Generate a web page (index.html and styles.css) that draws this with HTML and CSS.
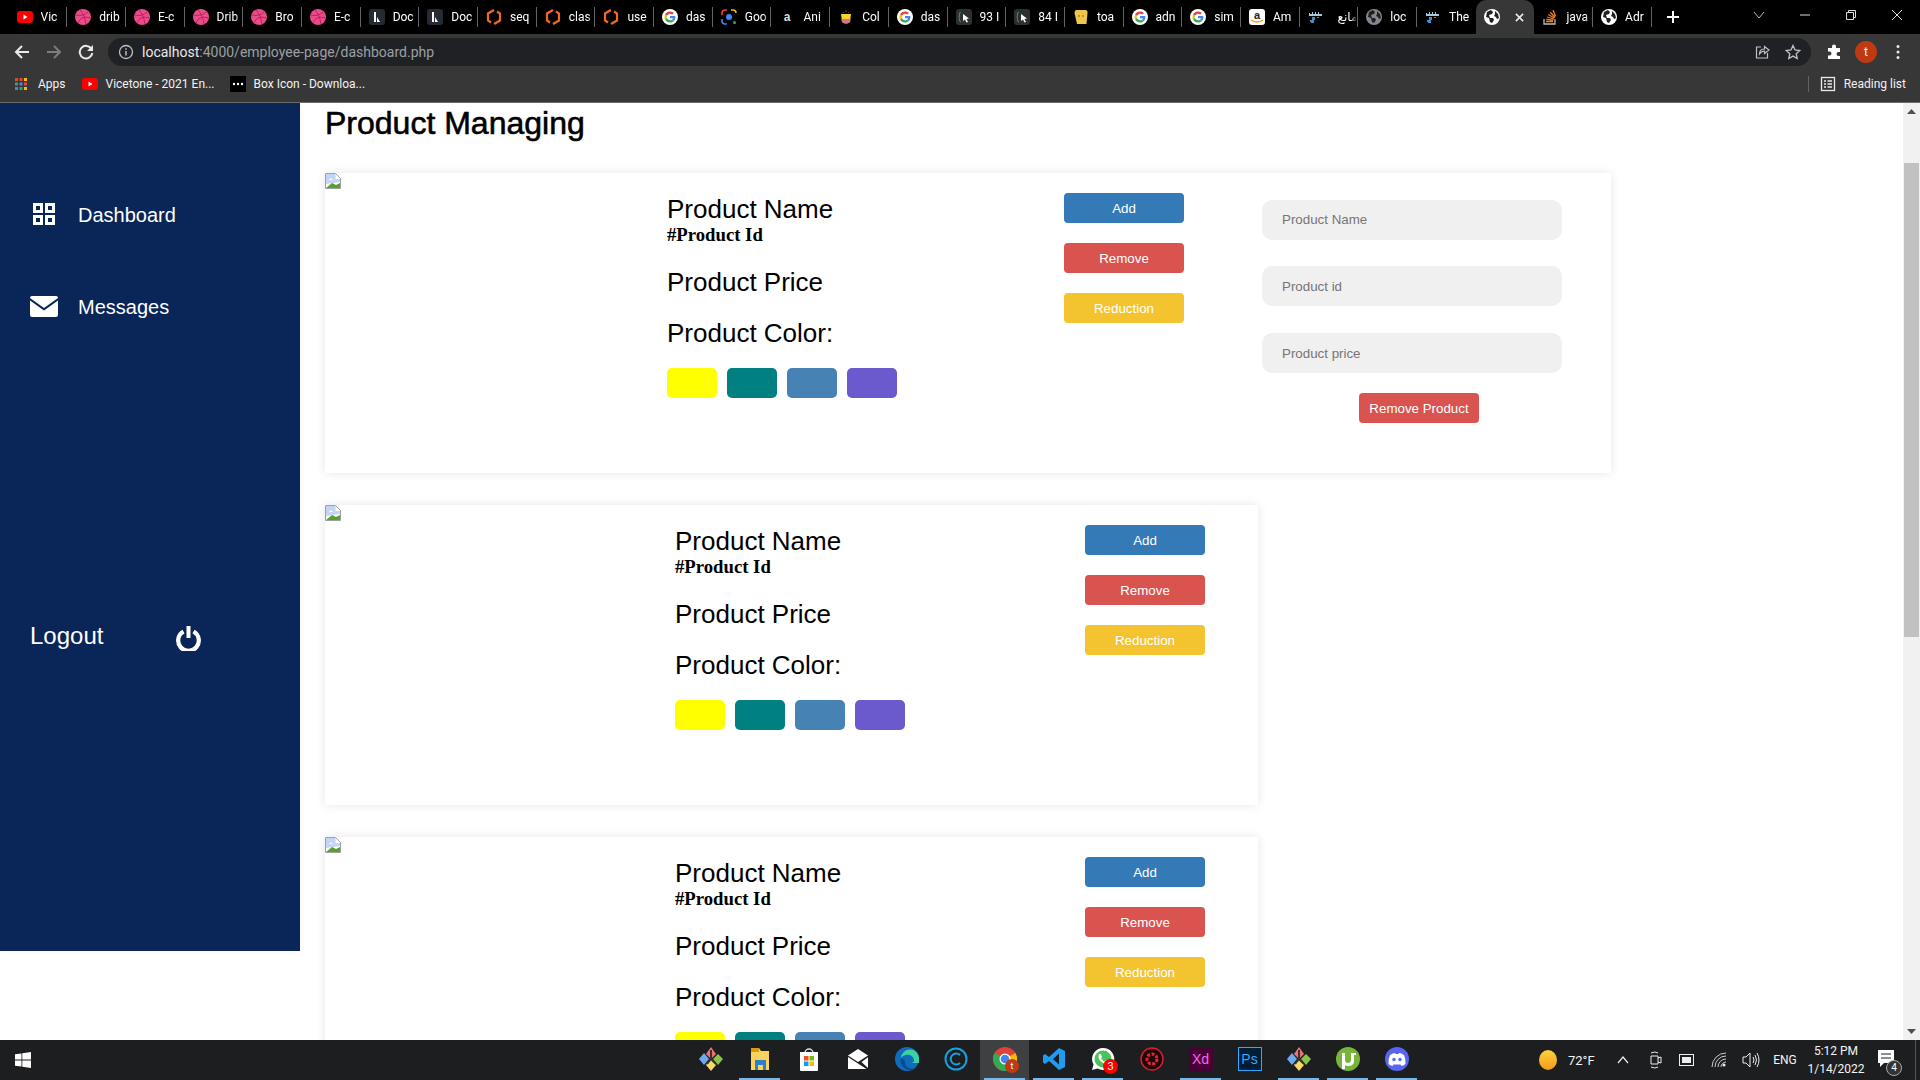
FILE: index.html
```html
<!DOCTYPE html>
<html>
<head>
    <meta charset="utf-8">
    <title>Product Managing</title>
    <link rel="stylesheet" href="styles.css">
</head>
<body>
<svg class="defs">
    <symbol id="i-yt" viewBox="0 0 16 16"><rect y="2" width="16" height="12" rx="3" fill="#f00"/><path d="M6.5 5.5l4 2.5-4 2.5z" fill="#fff"/></symbol>
    <symbol id="i-drib" viewBox="0 0 16 16"><circle cx="8" cy="8" r="8" fill="#ea4c89"/><path d="M1 6c5 1 9 0 12-3M3 14C5 9 9 7 15 9M5 1c3 3 5 8 6 14" fill="none" stroke="#b8215f" stroke-width="1"/></symbol>
    <symbol id="i-doc" viewBox="0 0 16 16"><rect width="16" height="16" rx="3" fill="#252b33"/><path d="M5 3h2v10H5zM8 8l3 5H8z" fill="#fff"/></symbol>
    <symbol id="i-seq" viewBox="0 0 16 16"><path d="M8 1L2 4.500v7l3 2M11 2.500l3 2v7L8 15" fill="none" stroke="#f26a1b" stroke-width="2.200"/></symbol>
    <symbol id="i-goo" viewBox="0 0 48 48"><circle cx="24" cy="24" r="24" fill="#fff"/><path fill="#ea4335" d="M24 14c2.700 0 5 1 6.800 2.700l4.800-4.800C32.600 9.200 28.700 7.500 24 7.500c-6.500 0-12 3.700-14.700 9.100l5.600 4.300C16.200 17 19.800 14 24 14z"/><path fill="#4285f4" d="M40 24.500c0-1.200-.1-2.300-.3-3.400H24v6.400h9c-.4 2.100-1.600 3.800-3.400 5l5.400 4.200c3.200-2.900 5-7.200 5-12.200z"/><path fill="#fbbc05" d="M14.900 27.100c-.3-1-.5-2-.5-3.100s.2-2.100.5-3.100l-5.600-4.300C8.200 18.800 7.500 21.300 7.500 24s.7 5.200 1.800 7.400z"/><path fill="#34a853" d="M24 40.500c4.500 0 8.200-1.500 11-4l-5.400-4.200c-1.500 1-3.400 1.600-5.600 1.600-4.200 0-7.800-2.900-9.100-6.800l-5.600 4.300C12 36.800 17.500 40.500 24 40.500z"/></symbol>
    <symbol id="i-lens" viewBox="0 0 16 16"><path d="M1 6V4a3 3 0 0 1 3-3h2" fill="none" stroke="#ea4335" stroke-width="1.600"/><path d="M10 1h2a3 3 0 0 1 3 3" fill="none" stroke="#fbbc05" stroke-width="1.600"/><path d="M6 15H4a3 3 0 0 1-3-3v-2" fill="none" stroke="#4285f4" stroke-width="1.600"/><circle cx="8" cy="8" r="3" fill="#4285f4"/><circle cx="13.500" cy="13.500" r="1.500" fill="#34a853"/></symbol>
    <symbol id="i-a" viewBox="0 0 16 16"><text x="8" y="12" text-anchor="middle" font-family="Liberation Sans, sans-serif" font-size="12" font-weight="bold" fill="#ddd">a</text></symbol>
    <symbol id="i-col" viewBox="0 0 16 16"><path d="M3 5h10l-1 8q-4 3-8 0z" fill="#f6d32d"/><path d="M3.500 10h9l-.5 3q-4 3-8 0z" fill="#d9708f"/><path d="M5 3l.5 1M8 1v2M11 3l-.5 1" stroke="#444"/></symbol>
    <symbol id="i-cur" viewBox="0 0 16 16"><rect width="16" height="16" rx="3" fill="#2d302f"/><path d="M5 3q-2 0-1.500 3L3 8l.5 1.500Q3 13 5 13" fill="none" stroke="#2f9e5f"/><path d="M7 5l6 4.500-2.500.5 1.500 3-1.500.5-1.500-3L7 12z" fill="#fff"/></symbol>
    <symbol id="i-toast" viewBox="0 0 16 16"><path d="M3 1h10q2 1 1.500 3L13.500 15H4L1.500 4Q1.500 2 3 1z" fill="#eec64c"/><circle cx="6" cy="7" r=".8" fill="#76591a"/><circle cx="10" cy="7" r=".8" fill="#76591a"/></symbol>
    <symbol id="i-amz" viewBox="0 0 16 16"><rect width="16" height="16" rx="3" fill="#fff"/><text x="8" y="10" text-anchor="middle" font-family="Liberation Sans, sans-serif" font-size="11" font-weight="bold" fill="#222">a</text><path d="M2 11q6 4 12 0" fill="none" stroke="#f90" stroke-width="1.500"/></symbol>
    <symbol id="i-blot" viewBox="0 0 16 16"><path d="M1 4h1v1h2V3h1v2h2V3h1v2h2V3h1v2h3v2H1z" fill="#a8c9dc"/><path d="M4 8h3v3H6v3H3v-1H2v-2h2z" fill="#3d8fd0"/><path d="M9 8h2v1H9z" fill="#6b8ea3"/></symbol>
    <symbol id="i-globe" viewBox="0 0 16 16"><circle cx="8" cy="8" r="8" fill="#fff"/><path d="M3 3l4-2 2 2-1 2-3 1 1 3 3 0 1 2-2 3-2-1-1-4-3-1zM11 2l3 3 1 4-2 1-1-2-2-1 1-2z" fill="#202124"/></symbol>
    <symbol id="i-globe2" viewBox="0 0 16 16"><circle cx="8" cy="8" r="8" fill="#84888c"/><path d="M3 3l4-2 2 2-1 2-3 1 1 3 3 0 1 2-2 3-2-1-1-4-3-1zM11 2l3 3 1 4-2 1-1-2-2-1 1-2z" fill="#202124"/></symbol>
    <symbol id="i-so" viewBox="0 0 16 16"><path d="M2 10v5h11v-5" fill="none" stroke="#bcbbbb" stroke-width="1.300"/><path d="M4 12.500h7M4.300 10.300l7 .8M5 8l6.800 2M6.300 5.500l6 3.500M8.300 3.200l4.700 5M11 1l2.500 6.300" fill="none" stroke="#f48024" stroke-width="1.300"/></symbol>
    <symbol id="i-kraken" viewBox="0 0 24 24"><path d="M12 0l5 7-5 5-5-5z" fill="#f0716b"/><path d="M19 7l5 5-5 6-5-6z" fill="#8bc34a"/><path d="M12 12l5 6-5 6-5-6z" fill="#f9d866"/><path d="M5 6l5 6-5 6-5-6z" fill="#6da8f0"/><path d="M12 3v9l5 5M12 12l-4 5" stroke="#333" stroke-width="2" fill="none"/></symbol>
    <symbol id="i-broken" viewBox="0 0 16 16"><path d="M.5.500h10l5 5v10H.5z" fill="#fff" stroke="#a0a0a0"/><path d="M1 1h9.500v5H15v3L1 11z" fill="#c3d4f5"/><path d="M4 7q2-3 4 0z" fill="#fff"/><path d="M1 15l6-5 4 2 4-2v5z" fill="#5aa02c"/></symbol>
</svg>

<div class="tabstrip">
    <div class="tabs">
        <div class="tab"><svg class="fav"><use href="#i-yt"/></svg><span class="tab-title">Vic</span></div>
        <div class="tab"><svg class="fav"><use href="#i-drib"/></svg><span class="tab-title">drib</span></div>
        <div class="tab"><svg class="fav"><use href="#i-drib"/></svg><span class="tab-title">E-c</span></div>
        <div class="tab"><svg class="fav"><use href="#i-drib"/></svg><span class="tab-title">Drib</span></div>
        <div class="tab"><svg class="fav"><use href="#i-drib"/></svg><span class="tab-title">Bro</span></div>
        <div class="tab"><svg class="fav"><use href="#i-drib"/></svg><span class="tab-title">E-c</span></div>
        <div class="tab"><svg class="fav"><use href="#i-doc"/></svg><span class="tab-title">Doc</span></div>
        <div class="tab"><svg class="fav"><use href="#i-doc"/></svg><span class="tab-title">Doc</span></div>
        <div class="tab"><svg class="fav"><use href="#i-seq"/></svg><span class="tab-title">seq</span></div>
        <div class="tab"><svg class="fav"><use href="#i-seq"/></svg><span class="tab-title">clas</span></div>
        <div class="tab"><svg class="fav"><use href="#i-seq"/></svg><span class="tab-title">use</span></div>
        <div class="tab"><svg class="fav"><use href="#i-goo"/></svg><span class="tab-title">das</span></div>
        <div class="tab"><svg class="fav"><use href="#i-lens"/></svg><span class="tab-title">Goo</span></div>
        <div class="tab"><svg class="fav"><use href="#i-a"/></svg><span class="tab-title">Ani</span></div>
        <div class="tab"><svg class="fav"><use href="#i-col"/></svg><span class="tab-title">Col</span></div>
        <div class="tab"><svg class="fav"><use href="#i-goo"/></svg><span class="tab-title">das</span></div>
        <div class="tab"><svg class="fav"><use href="#i-cur"/></svg><span class="tab-title">93 I</span></div>
        <div class="tab"><svg class="fav"><use href="#i-cur"/></svg><span class="tab-title">84 I</span></div>
        <div class="tab"><svg class="fav"><use href="#i-toast"/></svg><span class="tab-title">toa</span></div>
        <div class="tab"><svg class="fav"><use href="#i-goo"/></svg><span class="tab-title">adn</span></div>
        <div class="tab"><svg class="fav"><use href="#i-goo"/></svg><span class="tab-title">sim</span></div>
        <div class="tab"><svg class="fav"><use href="#i-amz"/></svg><span class="tab-title">Am</span></div>
        <div class="tab"><svg class="fav"><use href="#i-blot"/></svg><span class="tab-title" dir="rtl">مانع</span></div>
        <div class="tab"><svg class="fav"><use href="#i-globe2"/></svg><span class="tab-title">loc</span></div>
        <div class="tab tab-before-active"><svg class="fav"><use href="#i-blot"/></svg><span class="tab-title">The</span></div>
        <div class="tab tab-active"><svg class="fav"><use href="#i-globe"/></svg><svg class="tab-close" viewBox="0 0 10 10"><path d="M1 1l8 8M9 1L1 9" stroke="#e8eaed" stroke-width="1.800"/></svg></div>
        <div class="tab"><svg class="fav"><use href="#i-so"/></svg><span class="tab-title">java</span></div>
        <div class="tab"><svg class="fav"><use href="#i-globe"/></svg><span class="tab-title">Adr</span></div>
    </div>
    <svg class="new-tab" viewBox="0 0 14 14"><path d="M7 1v12M1 7h12" stroke="#fff" stroke-width="2"/></svg>
    <div class="win-controls">
        <div class="win-btn"><svg width="12" height="12" viewBox="0 0 12 12"><path d="M1 3l5 6 5-6" fill="none" stroke="#bbb"/></svg></div>
        <div class="win-btn"><svg width="12" height="12" viewBox="0 0 12 12"><path d="M1 6h10" stroke="#ddd"/></svg></div>
        <div class="win-btn"><svg width="12" height="12" viewBox="0 0 12 12"><path d="M1.500 3.500h7v7h-7zM3.500 3.500v-2h7v7h-2" fill="none" stroke="#ddd"/></svg></div>
        <div class="win-btn"><svg width="12" height="12" viewBox="0 0 12 12"><path d="M1 1l10 10M11 1L1 11" stroke="#ddd"/></svg></div>
    </div>
</div>

<div class="toolbar">
    <div class="nav-btn"><svg width="16" height="16" viewBox="0 0 16 16"><path d="M15 8H2M8 2L2 8l6 6" fill="none" stroke="#e8eaed" stroke-width="2"/></svg></div>
    <div class="nav-btn"><svg width="16" height="16" viewBox="0 0 16 16"><path d="M1 8h13M8 2l6 6-6 6" fill="none" stroke="#7b7d80" stroke-width="2"/></svg></div>
    <div class="nav-btn"><svg width="16" height="16" viewBox="0 0 16 16"><path d="M13.500 5A6.300 6.300 0 1 0 14.300 9" fill="none" stroke="#e8eaed" stroke-width="2"/><path d="M15 1v6H9z" fill="#e8eaed"/></svg></div>
    <div class="omnibox">
        <svg class="omni-icon" viewBox="0 0 16 16"><circle cx="8" cy="8" r="6.500" fill="none" stroke="#bdc1c6" stroke-width="1.300"/><path d="M8 7v4.500M8 4.300v1.500" stroke="#bdc1c6" stroke-width="1.500"/></svg>
        <span class="url"><span class="url-host">localhost</span>:4000/employee-page/dashboard.php</span>
        <svg class="omni-icon omni-share" viewBox="0 0 16 16"><path d="M7 3H2.500v11h11V9" fill="none" stroke="#bdc1c6" stroke-width="1.200"/><path d="M5.500 10q0-5 5-5V2.500L15 6l-4.500 3.500V7q-3 0-5 3z" fill="none" stroke="#bdc1c6" stroke-width="1.200"/></svg>
        <svg class="omni-icon" viewBox="0 0 16 16"><path d="M8 1.500l2 4.500 4.800.5-3.600 3.200 1 4.800L8 12.100 3.800 14.500l1-4.800L1.200 6.500 6 6z" fill="none" stroke="#bdc1c6" stroke-width="1.300"/></svg>
    </div>
    <div class="nav-btn"><svg width="16" height="16" viewBox="0 0 16 16"><path d="M6 2.500a2 2 0 0 1 4 0V4h4v4h-1.500a2 2 0 0 0 0 4H14v3H2v-3.500h1.500a2 2 0 0 0 0-4H2V4h4z" fill="#fff"/></svg></div>
    <div class="nav-btn"><span class="avatar">t</span></div>
    <div class="nav-btn"><svg width="4" height="16" viewBox="0 0 4 16"><circle cx="2" cy="2.500" r="1.500" fill="#e8eaed"/><circle cx="2" cy="8" r="1.500" fill="#e8eaed"/><circle cx="2" cy="13.500" r="1.500" fill="#e8eaed"/></svg></div>
</div>

<div class="bookmarks">
    <svg class="bm-icon" viewBox="0 0 16 16">
        <path d="M2 2h3v3H2z" fill="#ea4335"/><path d="M6.500 2h3v3h-3z" fill="#ea4335"/><path d="M11 2h3v3h-3z" fill="#fbbc05"/>
        <path d="M2 6.500h3v3H2z" fill="#34a853"/><path d="M6.500 6.500h3v3h-3z" fill="#4285f4"/><path d="M11 6.500h3v3h-3z" fill="#ea4335"/>
        <path d="M2 11h3v3H2z" fill="#4285f4"/><path d="M6.500 11h3v3h-3z" fill="#34a853"/><path d="M11 11h3v3h-3z" fill="#fbbc05"/>
    </svg>
    <span class="bm-text bm-apps">Apps</span>
    <svg class="bm-icon bm-yt"><use href="#i-yt"/></svg>
    <span class="bm-text bm-vice">Vicetone - 2021 En...</span>
    <svg class="bm-icon bm-box" viewBox="0 0 16 16"><rect width="16" height="16" fill="#000"/><circle cx="4" cy="8" r="1.200" fill="#fff"/><circle cx="8" cy="8" r="1.200" fill="#fff"/><circle cx="12" cy="8" r="1.200" fill="#fff"/></svg>
    <span class="bm-text">Box Icon - Downloa...</span>
    <div class="reading-list">
        <svg class="bm-icon" viewBox="0 0 16 16"><rect x="1.500" y="1.500" width="13" height="13" fill="none" stroke="#e8eaed" stroke-width="1.300"/><path d="M4 5h2M4 8h2M4 11h2M7.500 5H12M7.500 8H12M7.500 11H12" stroke="#e8eaed" stroke-width="1.300"/></svg>
        <span class="bm-text">Reading list</span>
    </div>
</div>

<div class="viewport">
    <div class="sidebar">
        <a class="side-link">
            <span class="side-icon"><svg width="22" height="22" viewBox="0 0 22 22"><path d="M1.500 1.500h7v7h-7zM13.500 1.500h7v7h-7zM1.500 13.500h7v7h-7zM13.500 13.500h7v7h-7z" fill="none" stroke="#fff" stroke-width="3"/></svg></span>
            <span class="side-text">Dashboard</span>
        </a>
        <a class="side-link">
            <span class="side-icon"><svg width="28" height="21" viewBox="0 0 28 21"><path d="M2 0h24a2 2 0 0 1 2 2L14 12 0 2a2 2 0 0 1 2-2z" fill="#fff"/><path d="M0 4.500l14 10 14-10V19a2 2 0 0 1-2 2H2a2 2 0 0 1-2-2z" fill="#fff"/></svg></span>
            <span class="side-text">Messages</span>
        </a>
        <a class="side-logout">
            Logout
            <svg class="power" width="25" height="25" viewBox="0 0 25 25"><path d="M7.500 5.500a10.300 10.300 0 1 0 10 0" fill="none" stroke="#fff" stroke-width="4.200"/><path d="M12.500 0v12" stroke="#fff" stroke-width="4"/></svg>
        </a>
    </div>

    <div class="content">
        <h1 class="page-title">Product Managing</h1>

        <div class="card card-edit">
            <svg class="broken"><use href="#i-broken"/></svg>
            <div class="info">
                <h2 class="info-name">Product Name</h2>
                <h3 class="info-id">#Product Id</h3>
                <h2 class="info-price">Product Price</h2>
                <h2 class="info-color">Product Color:</h2>
                <div class="swatches">
                    <span class="swatch sw-yellow"></span><span class="swatch sw-teal"></span><span class="swatch sw-steel"></span><span class="swatch sw-slate"></span>
                </div>
            </div>
            <div class="actions">
                <button class="btn btn-add">Add</button>
                <button class="btn btn-remove">Remove</button>
                <button class="btn btn-reduce">Reduction</button>
            </div>
            <form class="edit-form">
                <input class="field" type="text" placeholder="Product Name">
                <input class="field" type="text" placeholder="Product id">
                <input class="field field-last" type="text" placeholder="Product price">
                <button class="btn btn-remove btn-remove-product" type="button">Remove Product</button>
            </form>
        </div>

        <div class="card">
            <svg class="broken"><use href="#i-broken"/></svg>
            <div class="info">
                <h2 class="info-name">Product Name</h2>
                <h3 class="info-id">#Product Id</h3>
                <h2 class="info-price">Product Price</h2>
                <h2 class="info-color">Product Color:</h2>
                <div class="swatches">
                    <span class="swatch sw-yellow"></span><span class="swatch sw-teal"></span><span class="swatch sw-steel"></span><span class="swatch sw-slate"></span>
                </div>
            </div>
            <div class="actions">
                <button class="btn btn-add">Add</button>
                <button class="btn btn-remove">Remove</button>
                <button class="btn btn-reduce">Reduction</button>
            </div>
        </div>

        <div class="card">
            <svg class="broken"><use href="#i-broken"/></svg>
            <div class="info">
                <h2 class="info-name">Product Name</h2>
                <h3 class="info-id">#Product Id</h3>
                <h2 class="info-price">Product Price</h2>
                <h2 class="info-color">Product Color:</h2>
                <div class="swatches">
                    <span class="swatch sw-yellow"></span><span class="swatch sw-teal"></span><span class="swatch sw-steel"></span><span class="swatch sw-slate"></span>
                </div>
            </div>
            <div class="actions">
                <button class="btn btn-add">Add</button>
                <button class="btn btn-remove">Remove</button>
                <button class="btn btn-reduce">Reduction</button>
            </div>
        </div>
    </div>

    <div class="scrollbar">
        <svg class="scroll-arrow" viewBox="0 0 9 5"><path d="M4.500 0L9 5H0z" fill="#505050"/></svg>
        <div class="scroll-thumb"></div>
        <svg class="scroll-arrow scroll-arrow-down" viewBox="0 0 9 5"><path d="M4.500 5L9 0H0z" fill="#505050"/></svg>
    </div>
</div>

<div class="taskbar">
    <svg class="start" viewBox="0 0 16 16"><path d="M0 2.300l6.500-.9v6.200H0zM7.300 1.300L16 0v7.600H7.300zM0 8.400h6.500v6.200L0 13.700zM7.300 8.400H16V16l-8.700-1.200z" fill="#fff"/></svg>
    <div class="task-icons">
        <div class="task"><svg class="task-svg"><use href="#i-kraken"/></svg></div>
        <div class="task task-open"><svg class="task-svg" viewBox="0 0 24 24"><path d="M3 1h8l2 3h8v19H3z" fill="#f9d35c"/><path d="M3 1h8v4H3z" fill="#d99a0b"/><path d="M7 13h11v10h-3v-5H10v5H7z" fill="#2b80c9"/></svg></div>
        <div class="task"><svg class="task-svg" viewBox="0 0 24 24"><path d="M8 6a4 4 0 0 1 8 0" fill="none" stroke="#ddd" stroke-width="1.500"/><path d="M3 5h18v18a1 1 0 0 1-1 1H4a1 1 0 0 1-1-1z" fill="#fff"/><path d="M7 9h4.500v4.500H7z" fill="#f25022"/><path d="M12.500 9H17v4.500h-4.500z" fill="#7fba00"/><path d="M7 14.500h4.500V19H7z" fill="#00a4ef"/><path d="M12.500 14.500H17V19h-4.500z" fill="#ffb900"/></svg></div>
        <div class="task"><svg class="task-svg" viewBox="0 0 24 24"><path d="M12 2l10 6.500V22H2V8.500z" fill="#fff"/><path d="M2 8.500L12 15l10-6.500v1.800L15.500 15l6.500 6v1h-1.500L12 16.500 2 10z" fill="#1c1d1f"/></svg></div>
        <div class="task"><svg class="task-svg" viewBox="0 0 24 24"><circle cx="12" cy="12" r="12" fill="#0f6cbd"/><path d="M24 12a9 9 0 0 0-18-1c4-5 12-4 13 2 .3 2-1 3-3 3h8q0-2 0-4z" fill="#3bd1a1"/><path d="M6 11c-2 6 3 12 10 12 2 0 4-1 5-2-6 2-12-1-11-7z" fill="#084c8c"/></svg></div>
        <div class="task"><svg class="task-svg" viewBox="0 0 24 24"><circle cx="12" cy="12" r="10.500" fill="none" stroke="#18a0e0" stroke-width="2"/><path d="M16 8a5.500 5.500 0 1 0 0 8" fill="none" stroke="#18a0e0" stroke-width="2"/></svg></div>
        <div class="task task-open task-active"><svg class="task-svg" viewBox="0 0 24 24"><circle cx="12" cy="12" r="12" fill="#db4437"/><path d="M12 12L22.400 6A12 12 0 0 1 14 23.800z" fill="#fbbc05"/><path d="M12 12L14 23.800A12 12 0 0 1 1.600 6z" fill="#34a853"/><circle cx="12" cy="12" r="5.500" fill="#fff"/><circle cx="12" cy="12" r="4.300" fill="#4285f4"/></svg><span class="task-avatar">t</span></div>
        <div class="task task-open"><svg class="task-svg" viewBox="0 0 24 24"><path d="M17 1l6 3v16l-6 3L7 14l-4 3-2-1.500v-7L3 7l4 3z" fill="#1f9cf0"/><path d="M17 6.500L11 12l6 5.500z" fill="#1c1d1f"/></svg></div>
        <div class="task task-open"><svg class="task-svg" viewBox="0 0 24 24"><path d="M12 1a11 11 0 0 0-9.500 16.500L1 23l5.700-1.500A11 11 0 1 0 12 1z" fill="#fff"/><circle cx="12" cy="12" r="8.500" fill="#4cc35a"/><path d="M8 7l2 0 1 3-1 1.500 3 3 1.500-1 3 1-.5 2q-4 1-7-2T7.500 9z" fill="#fff"/></svg><span class="task-badge">3</span></div>
        <div class="task"><svg class="task-svg" viewBox="0 0 24 24"><circle cx="12" cy="12" r="11" fill="#200608" stroke="#d3202a" stroke-width="1.500"/><circle cx="12" cy="12" r="5" fill="none" stroke="#e3262f" stroke-width="3" stroke-dasharray="3 1.500"/></svg></div>
        <div class="task task-open"><span class="app-tile tile-xd">Xd</span></div>
        <div class="task"><span class="app-tile tile-ps">Ps</span></div>
        <div class="task task-open"><svg class="task-svg"><use href="#i-kraken"/></svg></div>
        <div class="task task-open"><svg class="task-svg" viewBox="0 0 24 24"><circle cx="12" cy="12" r="12" fill="#78b43c"/><path d="M6 6h3v7q0 3 3 3t3-3V6h5v2h-2v6q0 5-6 5-2 0-3-1v4H6z" fill="#fff"/></svg></div>
        <div class="task task-open"><svg class="task-svg" viewBox="0 0 24 24"><circle cx="12" cy="12" r="12" fill="#5865f2"/><path d="M5 8q3-2 5-2l.5 1h3l.5-1q2 0 5 2 2 4 1.500 9-2 1.500-4 2l-1-1.500H8.500L7.500 19q-2-.5-4-2Q3 12 5 8z" fill="#fff"/><circle cx="9" cy="12.500" r="1.700" fill="#5865f2"/><circle cx="15" cy="12.500" r="1.700" fill="#5865f2"/></svg></div>
    </div>
    <div class="tray">
        <span class="sun"></span>
        <span class="tray-temp">72°F</span>
        <div class="tray-icon"><svg width="12" height="12" viewBox="0 0 12 12"><path d="M1 9l5-6 5 6" fill="none" stroke="#eee" stroke-width="1.200"/></svg></div>
        <div class="tray-icon"><svg width="14" height="18" viewBox="0 0 14 18"><path d="M3 5h7v8H3zM10 7l3-1v6l-3-1M3 2q4-2 7 0M3 16q4 2 7 0" fill="none" stroke="#eee"/></svg></div>
        <div class="tray-icon"><svg width="16" height="12" viewBox="0 0 16 12"><rect x=".5" y=".5" width="14" height="11" fill="none" stroke="#eee"/><rect x="3" y="3" width="9" height="6" fill="#eee"/></svg></div>
        <div class="tray-icon"><svg width="16" height="16" viewBox="0 0 16 16"><path d="M1 15A14 14 0 0 1 15 1M4 15A11 11 0 0 1 15 4M7 15a8 8 0 0 1 8-8M10 15a5 5 0 0 1 5-5" fill="none" stroke="#ccc"/><circle cx="13" cy="13" r="1.500" fill="#eee"/></svg></div>
        <div class="tray-icon"><svg width="18" height="16" viewBox="0 0 18 16"><path d="M1 5h3l4-4v14l-4-4H1zM11 5q2 3 0 6M13 3q3 5 0 10M15 1q4 7 0 14" fill="none" stroke="#eee"/></svg></div>
        <span class="tray-lang">ENG</span>
        <div class="clock"><div>5:12 PM</div><div>1/14/2022</div></div>
        <div class="notify"><svg width="20" height="20" viewBox="0 0 20 20"><path d="M2 2h16v13H8l-4 4v-4H2z" fill="#fff"/><path d="M5 6h10M5 10h10" stroke="#1c1d1f"/></svg><span class="notify-count">4</span></div>
        <div class="show-desktop"></div>
    </div>
</div>
</body>
</html>
```
FILE: styles.css
```css
* {
    box-sizing: border-box;
}

html, body {
    height: 100%;
}

body {
    margin: 0;
    display: flex;
    flex-direction: column;
    overflow: hidden;
    background-color: #fff;
    font-family: "Liberation Sans", Arial, sans-serif;
    color: #000;
}

.defs {
    display: none;
}

/* browser frame */
.tabstrip {
    display: flex;
    height: 34px;
    flex-shrink: 0;
    background-color: #000;
    font-family: Roboto, "DejaVu Sans", sans-serif;
}

.tabs {
    display: flex;
    align-items: flex-start;
    padding: 7px 0 0 8.5px;
}

.tab {
    display: flex;
    align-items: center;
    gap: 8px;
    width: 58.7px;
    height: 20px;
    padding-left: 8px;
    border-right: 1px solid #5f6368;
    overflow: hidden;
}

.fav {
    width: 16px;
    height: 16px;
    flex-shrink: 0;
}

.tab-title {
    flex: 1;
    min-width: 0;
    white-space: nowrap;
    font-size: 12px;
    color: #fff;
    -webkit-mask-image: linear-gradient(to right, #000 75%, transparent 100%);
    mask-image: linear-gradient(to right, #000 75%, transparent 100%);
}

.tab-before-active {
    border-right: none;
}

.tab-active {
    height: 34px;
    margin-top: -7px;
    border-right: none;
    border-radius: 10px 10px 0 0;
    background-color: #373737;
}

.tab-close {
    width: 9px;
    height: 9px;
    margin-left: 7px;
}

.new-tab {
    width: 14px;
    height: 14px;
    margin: 10px 0 0 14px;
}

.win-controls {
    display: flex;
    margin-left: auto;
}

.win-btn {
    display: flex;
    justify-content: center;
    width: 46px;
    padding-top: 9px;
}

.toolbar {
    display: flex;
    align-items: center;
    height: 34px;
    flex-shrink: 0;
    padding: 2px 6px 0;
    background-color: #373737;
    font-family: Roboto, sans-serif;
}

.nav-btn {
    display: flex;
    align-items: center;
    justify-content: center;
    width: 32px;
    height: 28px;
}

.omnibox {
    display: flex;
    align-items: center;
    flex: 1;
    height: 28px;
    margin: 0 7px 0 6px;
    padding: 0 10px;
    border-radius: 14px;
    background-color: #202124;
    font-size: 14px;
    color: #9aa0a6;
}

.omni-icon {
    width: 16px;
    height: 16px;
    flex-shrink: 0;
}

.omni-share {
    margin-right: 15px;
}

.url {
    flex: 1;
    margin-left: 8px;
}

.url-host {
    color: #e8eaed;
}

.avatar {
    display: flex;
    align-items: center;
    justify-content: center;
    width: 22px;
    height: 22px;
    border-radius: 50%;
    background-color: #bf3a12;
    font-size: 12px;
    color: #fff;
}

.bookmarks {
    display: flex;
    align-items: center;
    height: 35px;
    flex-shrink: 0;
    padding: 0 14px 3px 13px;
    border-bottom: 1px solid #6b6b6b;
    background-color: #373737;
    font-family: Roboto, sans-serif;
}

.bm-icon {
    width: 16px;
    height: 16px;
    flex-shrink: 0;
}

.bm-text {
    margin-left: 8px;
    font-size: 12px;
    color: #f1f3f4;
    white-space: nowrap;
}

.bm-apps {
    margin-left: 9px;
}

.bm-yt {
    margin-left: 16px;
}

.bm-box {
    margin-left: 15px;
}

.reading-list {
    display: flex;
    align-items: center;
    margin-left: auto;
    padding-left: 11px;
    border-left: 1px solid #5f6368;
}

/* page */
.viewport {
    display: flex;
    align-items: flex-start;
    flex: 1;
    min-height: 0;
    overflow: hidden;
}

.sidebar {
    display: flex;
    flex-direction: column;
    width: 300px;
    height: 848px;
    flex-shrink: 0;
    padding-top: 86px;
    background-color: #0a2558;
    box-shadow: 0 0 6px rgba(0, 0, 0, 0.06);
    color: #fff;
}

.side-link {
    display: flex;
    align-items: center;
    height: 50px;
    margin-bottom: 42.5px;
    padding-left: 30px;
    font-size: 20px;
}

.side-text {
    padding-top: 2px;
}

.side-icon {
    display: flex;
    align-items: center;
    justify-content: center;
    width: 28px;
    margin-right: 20px;
}

.side-logout {
    display: flex;
    align-items: center;
    height: 50px;
    margin-top: 236.5px;
    padding-left: 30px;
    font-size: 24px;
}

.power {
    margin: 6px 0 0 73px;
}

.content {
    flex: 1;
    min-width: 0;
    height: 100%;
    padding: 2px 0 0 25px;
    overflow: hidden;
}

.page-title {
    margin: 0 0 31px;
    font-size: 32px;
    line-height: 37px;
    font-weight: normal;
    -webkit-text-stroke: 0.6px #000;
}

.card {
    display: grid;
    grid-template-columns: 350px 410px 1fr;
    width: 933px;
    height: 300px;
    margin-bottom: 32px;
    background-color: #fff;
    box-shadow: 0 0 10px rgba(0, 0, 0, 0.1);
}

.card-edit {
    grid-template-columns: 342px 397px 198px 1fr;
    width: 1286px;
}

.broken {
    width: 16px;
    height: 16px;
}

.info {
    padding-top: 21px;
}

.info h2 {
    margin: 0;
    font-size: 26px;
    line-height: 30px;
    font-weight: normal;
}

.info-id {
    margin: 0;
    font-family: "Liberation Serif", "Times New Roman", serif;
    font-size: 18.72px;
    line-height: 22px;
}

.info .info-price {
    margin-top: 21px;
}

.info .info-color {
    margin-top: 21px;
}

.swatches {
    display: flex;
    gap: 10px;
    margin-top: 20px;
}

.swatch {
    width: 50px;
    height: 30px;
    border-radius: 5px;
}

.sw-yellow {
    background-color: #ff0;
}

.sw-teal {
    background-color: #008080;
}

.sw-steel {
    background-color: #4682b4;
}

.sw-slate {
    background-color: #6a5acd;
}

.actions {
    display: flex;
    flex-direction: column;
    gap: 20px;
    padding-top: 20px;
}

.btn {
    width: 120px;
    height: 30px;
    padding: 0;
    border: none;
    border-radius: 4px;
    font-family: "Liberation Sans", Arial, sans-serif;
    font-size: 13.33px;
    color: #fff;
}

.btn-add {
    background-color: #337ab7;
}

.btn-remove {
    background-color: #d9534f;
}

.btn-reduce {
    background-color: #f4c430;
}

.edit-form {
    display: flex;
    flex-direction: column;
    align-items: flex-start;
    gap: 26px;
    padding-top: 27px;
}

.field {
    width: 300px;
    height: 40px;
    padding: 0 20px;
    border: none;
    border-radius: 10px;
    background-color: #f0f0f0;
    font-family: "Liberation Sans", Arial, sans-serif;
    font-size: 13.33px;
}

.field:first-child {
    padding-bottom: 1px;
}

.field-last {
    margin-top: 1px;
}

.btn-remove-product {
    margin: -6px 0 0 97px;
}

.scrollbar {
    display: flex;
    flex-direction: column;
    align-items: center;
    width: 17px;
    height: 100%;
    flex-shrink: 0;
    background-color: #f1f1f1;
}

.scroll-arrow {
    width: 9px;
    height: 5px;
    margin-top: 6px;
}

.scroll-thumb {
    width: 15px;
    height: 474px;
    margin-top: 49px;
    background-color: #c1c1c1;
}

.scroll-arrow-down {
    margin-top: auto;
    margin-bottom: 6px;
}

/* windows taskbar */
.taskbar {
    display: flex;
    align-items: center;
    height: 40px;
    flex-shrink: 0;
    background-color: #1d1e20;
    font-family: Roboto, sans-serif;
    color: #f4f4f4;
}

.start {
    width: 16px;
    height: 16px;
    margin-left: 15px;
}

.task-icons {
    display: flex;
    margin-left: 655px;
}

.task {
    display: flex;
    align-items: center;
    justify-content: center;
    position: relative;
    width: 49px;
    height: 40px;
    border-bottom: 2px solid transparent;
}

.task-open {
    border-image: linear-gradient(to right, transparent 5px, #76b9ed 5px, #76b9ed 44px, transparent 44px) 1;
}

.task-active {
    background-color: #3f4042;
}

.task-svg {
    width: 24px;
    height: 24px;
}

.task-avatar {
    position: absolute;
    right: 10px;
    bottom: 5px;
    width: 14px;
    height: 14px;
    border-radius: 50%;
    background-color: #bf3a12;
    font-size: 9px;
    line-height: 14px;
    text-align: center;
    color: #fff;
}

.task-badge {
    position: absolute;
    right: 9px;
    bottom: 4px;
    width: 15px;
    height: 15px;
    border-radius: 50%;
    background-color: #f00;
    font-size: 11px;
    line-height: 15px;
    text-align: center;
    color: #fff;
}

.app-tile {
    width: 24px;
    height: 24px;
    font-family: "Liberation Sans", Arial, sans-serif;
    font-size: 14px;
    line-height: 24px;
    text-align: center;
}

.tile-xd {
    border-radius: 3px;
    background-color: #470137;
    color: #ff61f6;
}

.tile-ps {
    border: 1px solid #31a8ff;
    background-color: #001e36;
    line-height: 22px;
    color: #31a8ff;
}

.tray {
    display: flex;
    align-items: center;
    margin-left: auto;
    font-size: 12px;
}

.sun {
    width: 18px;
    height: 20px;
    border-radius: 50%;
    background: linear-gradient(to bottom, #ffd23a, #f59a1c);
}

.tray-temp {
    width: 28px;
    margin: 0 11px;
    font-size: 13px;
}

.tray-icon {
    display: flex;
    align-items: center;
    justify-content: center;
    width: 32px;
    height: 40px;
}

.tray-lang {
    width: 36px;
    text-align: center;
}

.clock {
    width: 60px;
    margin-left: 3px;
    line-height: 18px;
    text-align: center;
}

.notify {
    position: relative;
    width: 24px;
    height: 24px;
    margin-left: 10px;
}

.notify-count {
    position: absolute;
    right: -2px;
    bottom: -4px;
    width: 16px;
    height: 16px;
    border: 1px solid #aaa;
    border-radius: 50%;
    background-color: #333;
    font-size: 10px;
    line-height: 14px;
    text-align: center;
    color: #fff;
}

.show-desktop {
    width: 1px;
    height: 40px;
    margin: 0 4px 0 15px;
    background-color: #555;
}
```
